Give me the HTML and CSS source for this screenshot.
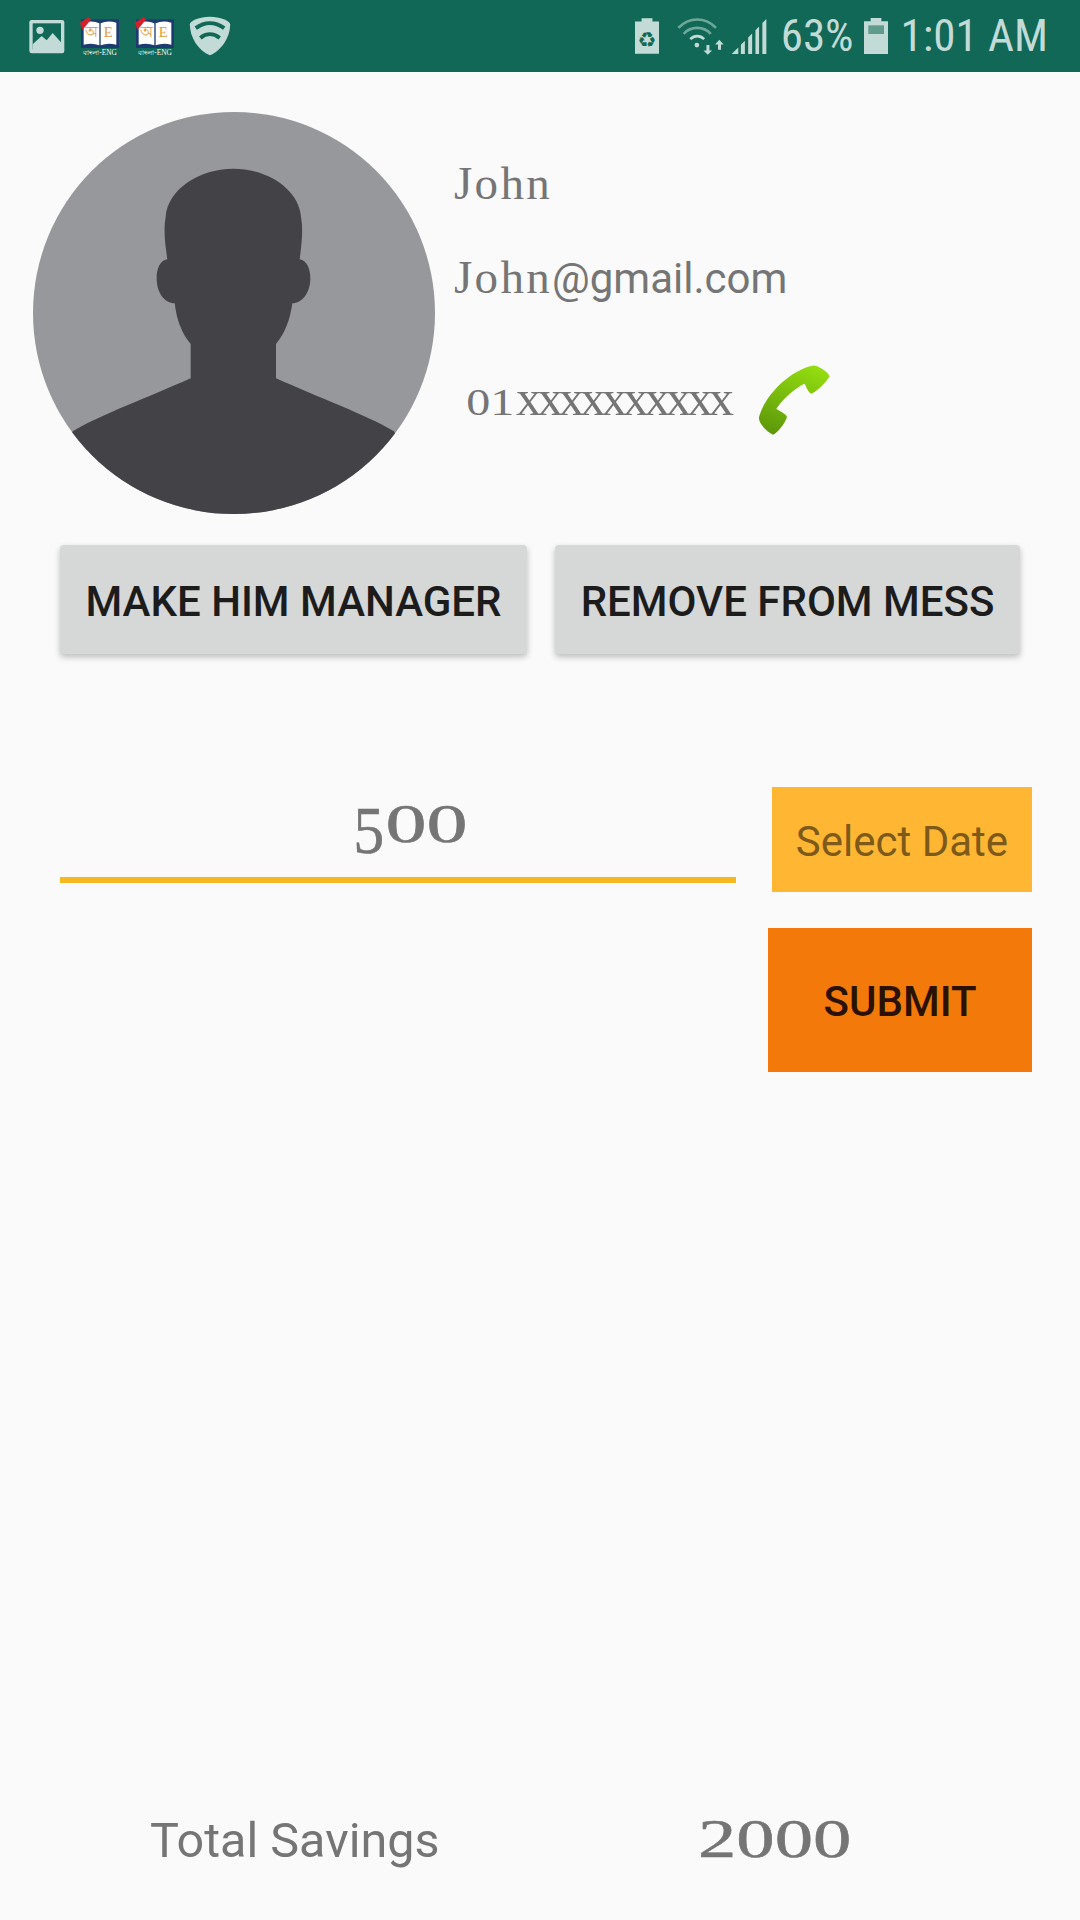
FILE: index.html
```html
<!DOCTYPE html>
<html lang="en">
<head>
    <meta charset="UTF-8">
    <meta name="viewport" content="width=device-width, initial-scale=1.0">
    <title>Member</title>
    <link rel="stylesheet" href="styles.css">
</head>
<body>
    <div class="statusbar">
        <div class="status-left">
            <svg class="ic-image" viewBox="88 52 106 105">
                <rect x="88" y="55" width="105" height="100" rx="7" fill="#c3dbd6"/>
                <rect x="98" y="65" width="85" height="78" fill="#116856"/>
                <circle cx="120" cy="86" r="11" fill="#c3dbd6"/>
                <path d="M98 128 L125 103 L140 116 L158 94 L183 122 V146 H98 Z" fill="#c3dbd6"/>
            </svg>
            <svg class="ic-book" viewBox="240 45 123 117">
                <rect x="246" y="52" width="114" height="86" fill="#1d3b70"/>
                <path d="M254 62 Q280 54 301 64 V130 Q280 122 254 128 Z" fill="#fff"/>
                <path d="M352 62 Q326 54 305 64 V130 Q326 122 352 128 Z" fill="#fff"/>
                <path d="M243 62 L268 46 L277 52 L250 84 Z" fill="#d3202b"/>
                <text x="278" y="106" class="book-a">অ</text>
                <text x="328" y="106" class="book-e">E</text>
                <text x="303" y="158" class="book-b">বাংলা-ENG</text>
            </svg>
            <svg class="ic-book" viewBox="240 45 123 117">
                <rect x="246" y="52" width="114" height="86" fill="#1d3b70"/>
                <path d="M254 62 Q280 54 301 64 V130 Q280 122 254 128 Z" fill="#fff"/>
                <path d="M352 62 Q326 54 305 64 V130 Q326 122 352 128 Z" fill="#fff"/>
                <path d="M243 62 L268 46 L277 52 L250 84 Z" fill="#d3202b"/>
                <text x="278" y="106" class="book-a">অ</text>
                <text x="328" y="106" class="book-e">E</text>
                <text x="303" y="158" class="book-b">বাংলা-ENG</text>
            </svg>
            <svg class="ic-shield" viewBox="563 45 127 122">
                <path d="M626 47 C595 47 565 60 565 70 C565 112 592 150 626 165 C660 150 688 112 688 70 C688 60 657 47 626 47 Z" fill="#c3dbd6"/>
                <path d="M583 82 C610 62 642 62 670 82 M597 112 C615 97 637 97 656 112" fill="none" stroke="#116856" stroke-width="12"/>
            </svg>
        </div>
        <div class="status-right">
            <svg class="ic-recycle" viewBox="105 50 73 108">
                <path d="M125 50 H158 V60 H178 V158 H105 V60 H125 Z" fill="#c3dbd6"/>
                <text x="141" y="137" class="recycle">♻</text>
            </svg>
            <svg class="ic-wifi" viewBox="230 46 152 112">
                <path d="M236 76 C268 42 318 42 350 76" fill="none" stroke="#6fa898" stroke-width="8"/>
                <path d="M252 94 C274 70 312 70 334 94" fill="none" stroke="#6fa898" stroke-width="8"/>
                <path d="M272 110 C284 98 302 98 314 110" fill="none" stroke="#c3dbd6" stroke-width="8"/>
                <circle cx="292" cy="128" r="7" fill="#c3dbd6"/>
                <path d="M321 128 H330 V144 H338 L325 157 L312 144 H321 Z" fill="#c3dbd6"/>
                <path d="M356 142 H365 V126 H373 L360 112 L347 126 H356 Z" fill="#c3dbd6"/>
            </svg>
            <svg class="ic-signal" viewBox="393 48 109 110">
                <path d="M395 156 L415 136 V156 Z M423 156 V128 L435 116 V156 Z M445 156 V106 L457 94 V156 Z M467 156 V84 L478 73 V156 Z M488 156 V62 L500 50 V156 Z" fill="#c3dbd6"/>
            </svg>
            <span class="status-text pct">63%</span>
            <svg class="ic-battery" viewBox="795 50 72 108">
                <path d="M815 50 H847 V60 H867 V158 H795 V60 H815 Z" fill="#c3dbd6"/>
                <rect x="808" y="72" width="47" height="26" fill="#5f9c8d"/>
            </svg>
            <span class="status-text clock">1:01 AM</span>
        </div>
    </div>

    <div class="profile">
        <svg class="avatar" viewBox="99 66 1206 1206">
            <defs>
                <clipPath id="avatarClip"><circle cx="702" cy="669" r="603"/></clipPath>
            </defs>
            <circle cx="702" cy="669" r="603" fill="#97989b"/>
            <path clip-path="url(#avatarClip)" fill="#434347" d="M218 1024 C300 975 450 920 572 865 L572 762 C545 730 530 690 524 640 C495 640 470 610 470 565 C470 535 480 512 502 508 C495 460 490 420 497 380 C503 300 595 236 700 236 C805 236 897 300 903 380 C910 420 905 460 899 508 C920 512 931 535 931 565 C931 610 905 640 877 640 C870 690 855 730 828 762 L828 865 C950 920 1100 975 1182 1024 L1310 1300 L100 1300 Z"/>
        </svg>
        <div class="info">
            <div class="info-name">John</div>
            <div class="info-mail"><span class="serif">John</span>@gmail.com</div>
            <div class="info-phone">
                <span class="phone-no"><span class="old-lead">0</span><span class="old-lead">1</span>xxxxxxxxxx</span>
                <svg class="ic-phone" viewBox="940 670 240 230">
                    <defs>
                        <linearGradient id="phoneFill" x1="0.7" y1="0" x2="0.3" y2="1">
                            <stop offset="0" stop-color="#93dc10"/>
                            <stop offset="1" stop-color="#5e9a0a"/>
                        </linearGradient>
                    </defs>
                    <path fill="url(#phoneFill)" d="M1120 680 C1050 695 975 770 958 835 C955 855 985 880 1000 888 C1015 880 1035 855 1042 835 C1040 825 1015 815 1010 810 C1030 780 1070 745 1095 735 C1100 745 1105 760 1115 765 C1135 755 1160 730 1170 712 C1160 695 1135 680 1120 680 Z"/>
                </svg>
            </div>
        </div>
    </div>

    <div class="actions">
        <button class="btn-grey btn-make">MAKE HIM MANAGER</button>
        <button class="btn-grey btn-remove">REMOVE FROM MESS</button>
    </div>

    <div class="form">
        <div class="amount"><span class="oldnum"><span class="drop">5</span>00</span></div>
        <div class="form-right">
            <button class="btn-date">Select Date</button>
            <button class="btn-submit">SUBMIT</button>
        </div>
    </div>

    <div class="footer">
        <span class="total-label">Total Savings</span>
        <span class="oldnum total-value">2000</span>
    </div>
</body>
</html>
```

FILE: styles.css
```css
html, body {
    margin: 0;
    padding: 0;
}
body {
    width: 1080px;
    height: 1920px;
    background-color: #fafafa;
    font-family: Roboto, "Noto Sans", sans-serif;
    color: #757575;
    display: flex;
    flex-direction: column;
    overflow: hidden;
}
button {
    border: none;
    padding: 0;
    font-family: Roboto, "Noto Sans", sans-serif;
}

/* status bar */
.statusbar {
    height: 72px;
    background-color: #116856;
    display: flex;
    justify-content: space-between;
    align-items: center;
    flex-shrink: 0;
}
.status-left {
    display: flex;
    align-items: center;
    gap: 14px;
    padding-left: 29px;
}
.status-right {
    display: flex;
    align-items: center;
    padding-right: 32px;
}
.ic-image { width: 36px; height: 35px; }
.ic-book { width: 41px; height: 39px; }
.ic-shield { width: 42px; height: 40px; }
.ic-recycle { width: 24px; height: 36px; }
.ic-wifi { width: 51px; height: 37px; margin-left: 17px; }
.ic-signal { width: 36px; height: 37px; margin-left: 4px; }
.ic-battery { width: 24px; height: 36px; margin-left: 10px; }
.book-a, .book-e {
    font-family: "Liberation Serif", serif;
    font-size: 44px;
    fill: #e39a3a;
    text-anchor: middle;
}
.book-b {
    font-family: "Liberation Serif", serif;
    font-size: 22px;
    fill: #fff;
    text-anchor: middle;
}
.recycle {
    font-family: "DejaVu Sans", sans-serif;
    font-size: 64px;
    fill: #116856;
    text-anchor: middle;
}
.status-text {
    font-size: 45px;
    line-height: 48px;
    color: #c3dbd6;
    font-stretch: 86%;
    white-space: nowrap;
}
.pct { margin-left: 14px; }
.clock { margin-left: 13px; }

/* profile */
.profile {
    display: flex;
    padding: 40px 0 0 33px;
    flex-shrink: 0;
}
.avatar {
    width: 402px;
    height: 402px;
    flex-shrink: 0;
}
.info {
    margin-left: 19px;
}
.info-name, .info-mail {
    font-size: 42px;
    line-height: 60px;
}
.info-name, .serif {
    font-family: "Liberation Serif", serif;
    font-size: 47px;
    letter-spacing: 2.3px;
}
.info-name { padding-top: 41px; }
.info-mail { padding-top: 34px; }
.info-phone {
    display: flex;
    align-items: center;
    margin: 53px 0 0 15px;
}
.phone-no {
    padding-bottom: 6px;
    font-family: "Liberation Serif", serif;
    font-size: 51px;
    letter-spacing: -4.1px;
    white-space: nowrap;
}
.old-lead {
    display: inline-block;
    font-size: 37px;
    letter-spacing: 0;
    margin-right: 5px;
    transform: scaleX(1.3);
}
.ic-phone {
    width: 80px;
    height: 77px;
    margin-left: 23px;
}

/* buttons */
.actions {
    display: flex;
    gap: 28px;
    padding: 31px 0 0 60px;
    flex-shrink: 0;
}
.btn-grey {
    height: 109px;
    padding-top: 3px;
    background-color: #d6d7d7;
    border-radius: 4px;
    box-shadow: 0 3px 6px rgba(0, 0, 0, 0.25);
    color: #1c1c1c;
    font-size: 42px;
    font-weight: 500;
    white-space: nowrap;
}
.btn-make { width: 467px; }
.btn-remove { width: 465px; }

/* form */
.form {
    display: flex;
    padding: 133px 48px 0 60px;
    justify-content: space-between;
    align-items: flex-start;
    flex-shrink: 0;
}
.amount {
    width: 676px;
    height: 90px;
    border-bottom: 6px solid #f5b81f;
    text-align: center;
}
.form-right {
    display: flex;
    flex-direction: column;
    align-items: flex-end;
    gap: 36px;
}
.btn-date {
    width: 260px;
    height: 105px;
    padding-top: 4px;
    background-color: #ffb733;
    color: #7d5a1a;
    font-size: 42px;
}
.btn-submit {
    width: 264px;
    height: 144px;
    padding-top: 2px;
    background-color: #f37a0a;
    color: #2a1104;
    font-size: 42px;
    font-weight: 500;
}

/* old style figures, the serif fonts here only have lining ones */
.oldnum {
    display: inline-block;
    font-family: "Liberation Serif", serif;
    font-size: 54px;
    transform: scaleX(1.42);
    -webkit-text-stroke: 0.5px #757575;
    white-space: nowrap;
}
.drop {
    display: inline-block;
    font-size: 68px;
    vertical-align: -11px;
    margin: 0 -6px 0 -7px;
    transform: scaleX(0.6);
}
.amount .oldnum {
    margin: 4px 0 0 24px;
    transform: scaleX(1.52);
}

/* footer */
.footer {
    margin-top: auto;
    display: flex;
    align-items: baseline;
    padding: 0 0 50px 150px;
}
.total-label {
    width: 548px;
    font-size: 48.5px;
}
.total-value {
    transform-origin: left center;
}
```
